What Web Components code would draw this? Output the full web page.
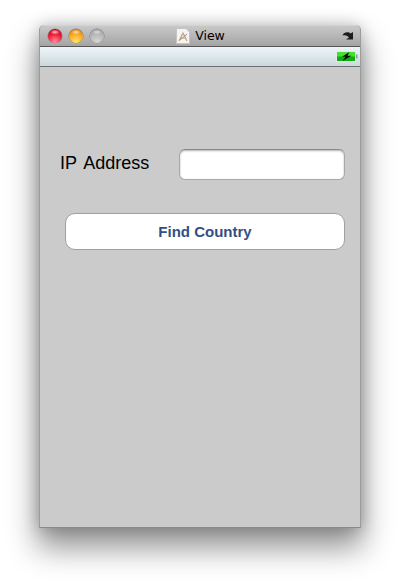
<!DOCTYPE html>
<html><head><meta charset="utf-8"><style>
html,body{margin:0;padding:0;background:#fff;height:582px;overflow:hidden}
</style></head><body>
<sim-desktop><sim-window><sim-titlebar title-text="View"></sim-titlebar><sim-status></sim-status><find-form></find-form></sim-window></sim-desktop>
<script>
function def(name,html){customElements.define(name,class extends HTMLElement{constructor(){super();this.attachShadow({mode:'open'}).innerHTML=html.replace('%T',this.getAttribute('title-text')||'')}})}
def('sim-desktop',`<style>:host{display:block;padding:25px 39px 0;height:557px;font-family:"Liberation Sans",Arial,sans-serif}</style><slot></slot>`);
def('sim-window',`<style>:host{display:flex;flex-direction:column;width:322px;height:503px;background:#cbcbcb;border:1px solid #9c9c9c;border-top:0;border-bottom-color:#8a8a8a;border-radius:5px 5px 0 0;
box-shadow:0 18px 30px 2px rgba(0,0,0,.42),0 0 16px rgba(0,0,0,.22);box-sizing:border-box}</style><slot></slot>`);
def('sim-titlebar',`<style>:host{display:grid;grid-template-columns:1fr auto 1fr;align-items:center;height:22px;box-sizing:border-box;padding:0 6px 0 8px;
background:linear-gradient(#dcdcdc 0,#c8c8c8 1px,#a4a4a4 100%);border-bottom:1px solid #555;border-radius:5px 5px 0 0}
.l{display:flex;gap:7px}.d{width:14px;height:14px;border-radius:50%;box-shadow:0 0 0 .5px rgba(0,0,0,.35),0 1px 0 rgba(255,255,255,.3)}
.r{background:radial-gradient(ellipse 5px 2.5px at 50% 22%,rgba(255,220,225,.9),rgba(255,200,210,0)),radial-gradient(circle at 50% 90%,#ff8f9e 0,#f4203a 50%,#b00418 88%)}
.y{background:radial-gradient(ellipse 5px 2.5px at 50% 22%,rgba(255,240,210,.85),rgba(255,230,180,0)),radial-gradient(circle at 50% 90%,#ffe56e 0,#fca71e 55%,#c96d08 90%)}
.g{background:radial-gradient(ellipse 5px 2.5px at 50% 22%,rgba(240,240,240,.7),rgba(240,240,240,0)),radial-gradient(circle at 50% 90%,#d6d6d6 0,#b6b6b6 55%,#989898 90%)}
.c{display:flex;align-items:center;gap:5px;font-size:13px;color:#000;font-family:"DejaVu Sans",sans-serif;margin-left:-1px}
.c span{font-size:12.5px}
.e{justify-self:end;display:flex}svg{display:block}</style>
<div class="l"><div class="d r"></div><div class="d y"></div><div class="d g"></div></div>
<div class="c"><svg width="14" height="16" viewBox="0 0 14 16"><path d="M.5.5H10L13.500 4V15.500H.5Z" fill="#f4f4f4" stroke="#c4c4c4"/><path d="M3 13 7 5 11 13M4 10H10" fill="none" stroke="#d0a060" stroke-width="1.200"/><path d="M4 12 11 6" stroke="#8a96b8"/></svg><span>View</span></div>
<div class="e"><svg width="12" height="9" viewBox="0 0 12 9"><path d="M.5 4.500C1.500 1 6.500 .3 8.500 2.500L11 1V8.500H4L7 6.500C5.500 4.500 3 4 .5 4.500Z" fill="#1c1c1c"/></svg></div>`);
def('sim-status',`<style>:host{display:flex;justify-content:flex-end;align-items:center;height:20px;box-sizing:border-box;padding:0 2px 0 0;
background:linear-gradient(#eef5f7,#ccd8dc);border-bottom:1px solid #6b6f71}svg{display:block}</style>
<svg width="22" height="11" viewBox="0 0 22 11"><rect x=".5" y=".5" width="19" height="10" fill="#e8eeee" stroke="#e4e8e8"/><rect x="1" y="1" width="18" height="9" fill="#0fae10"/><rect x="1" y="1" width="18" height="4.500" fill="#45e030"/><rect x="20" y="3.500" width="1.500" height="4" fill="#8f9a9a"/><path d="M13.500 1 6 5.800H9.500L6.500 10 15.500 4.800H11.500Z" fill="#0c0c0c"/></svg>`);
def('find-form',`<style>:host{display:flex;flex-direction:column;flex:1;padding:82px 15px 0 20px;font-family:"Liberation Sans",Arial,sans-serif}
.row{display:flex;align-items:center;justify-content:space-between;height:31px}
label{font-size:18px;color:#000;word-spacing:2.5px;margin-bottom:2px}
.i{width:166px;height:31px;box-sizing:border-box;background:#fff;border:1px solid #a8a8a8;border-top-color:#888;border-radius:6px;box-shadow:inset 0 1px 2px rgba(0,0,0,.3)}
button{display:block;margin:33px 0 0 5px;width:280px;height:37px;box-sizing:border-box;background:#fff;border:1px solid #a0a0a0;border-radius:10px;color:#324f85;font:bold 15px "Liberation Sans",Arial,sans-serif;padding:0}
</style><div class="row"><label>IP Address</label><div class="i"></div></div><button>Find Country</button>`);
</script></body></html>
